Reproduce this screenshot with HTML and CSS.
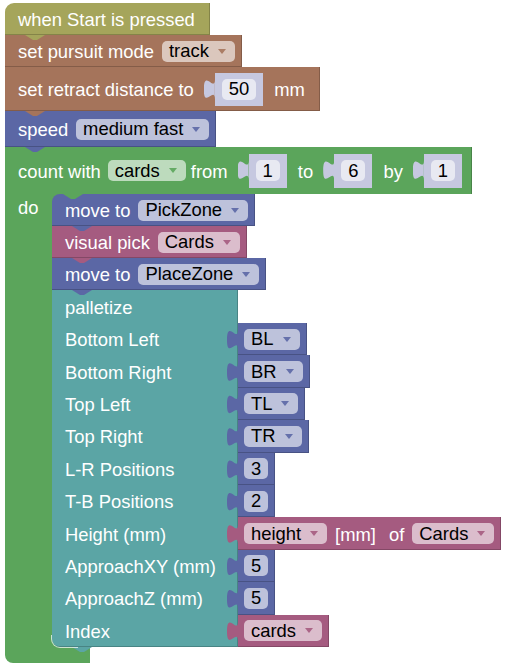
FILE: index.html
```html
<!DOCTYPE html>
<html>
<head>
    <meta charset="UTF-8">
    <link rel="stylesheet" href="styles.css">
</head>
<body>
    <div id="workspace">
        <div class="stack">
            <div class="block event hat next">
                <span class="label last">when Start is pressed</span>
            </div>
            <div class="block pursuit next">
                <span class="label">set pursuit mode</span>
                <span class="dropdown">track<i class="arrow"></i></span>
            </div>
            <div class="block pursuit retract next">
                <span class="label">set retract distance to</span>
                <span class="value shadow"><span class="field">50</span></span>
                <span class="label last">mm</span>
            </div>
            <div class="block motion speed next">
                <span class="label">speed</span>
                <span class="dropdown">medium fast<i class="arrow"></i></span>
            </div>
            <div class="loop loops">
                <div class="block loop-head">
                    <span class="label">count with</span>
                    <span class="dropdown var">cards<i class="arrow"></i></span>
                    <span class="label">from</span>
                    <span class="value shadow"><span class="field">1</span></span>
                    <span class="label">to</span>
                    <span class="value shadow"><span class="field">6</span></span>
                    <span class="label">by</span>
                    <span class="value shadow"><span class="field">1</span></span>
                </div>
                <div class="loop-body">
                    <div class="loop-arm"><span class="label">do</span></div>
                    <div class="inner">
                        <div class="block motion next">
                            <span class="label">move to</span>
                            <span class="dropdown">PickZone<i class="arrow"></i></span>
                        </div>
                        <div class="block vision next">
                            <span class="label">visual pick</span>
                            <span class="dropdown">Cards<i class="arrow"></i></span>
                        </div>
                        <div class="block motion next">
                            <span class="label">move to</span>
                            <span class="dropdown">PlaceZone<i class="arrow"></i></span>
                        </div>
                        <div class="block pallet palletize next">
                            <div class="row"><span class="label">palletize</span></div>
                            <div class="row">
                                <span class="label">Bottom Left</span>
                                <span class="value motion"><span class="dropdown">BL<i class="arrow"></i></span></span>
                            </div>
                            <div class="row">
                                <span class="label">Bottom Right</span>
                                <span class="value motion"><span class="dropdown">BR<i class="arrow"></i></span></span>
                            </div>
                            <div class="row">
                                <span class="label">Top Left</span>
                                <span class="value motion"><span class="dropdown">TL<i class="arrow"></i></span></span>
                            </div>
                            <div class="row">
                                <span class="label">Top Right</span>
                                <span class="value motion"><span class="dropdown">TR<i class="arrow"></i></span></span>
                            </div>
                            <div class="row">
                                <span class="label">L-R Positions</span>
                                <span class="value motion"><span class="field">3</span></span>
                            </div>
                            <div class="row">
                                <span class="label">T-B Positions</span>
                                <span class="value motion"><span class="field">2</span></span>
                            </div>
                            <div class="row">
                                <span class="label">Height (mm)</span>
                                <span class="value vision">
                                    <span class="dropdown">height<i class="arrow"></i></span>
                                    <span class="label">[mm]</span>
                                    <span class="label of">of</span>
                                    <span class="dropdown">Cards<i class="arrow"></i></span>
                                </span>
                            </div>
                            <div class="row">
                                <span class="label">ApproachXY (mm)</span>
                                <span class="value motion"><span class="field">5</span></span>
                            </div>
                            <div class="row">
                                <span class="label">ApproachZ (mm)</span>
                                <span class="value motion"><span class="field">5</span></span>
                            </div>
                            <div class="row">
                                <span class="label">Index</span>
                                <span class="value vision"><span class="dropdown">cards<i class="arrow"></i></span></span>
                            </div>
                        </div>
                    </div>
                </div>
                <div class="loop-foot next"></div>
            </div>
        </div>
    </div>
</body>
</html>
```

FILE: styles.css
```css
body {
    margin: 0;
    background: #fff;
    font-family: "Liberation Sans", Arial, sans-serif;
    font-size: 18.4px;
}
#workspace {
    padding: 3px 0 0 5px;
}
.stack {
    display: flex;
    flex-direction: column;
    align-items: flex-start;
}

/* category colours: block fill and field fill */
.event   { --c: #a5a55b; --f: #dbdbbd; }
.pursuit { --c: #a5745b; --f: #dbc7bd; }
.motion  { --c: #5b67a5; --f: #bdc2db; }
.loops   { --c: #5ba55b; --f: #bddbbd; }
.vision  { --c: #a55b80; --f: #dbbdcc; }
.pallet  { --c: #5ba5a5; --f: #bddbdb; }
.shadow  { --c: #c6c8e0; --f: #e8e9f2; }

.block {
    position: relative;
    display: flex;
    align-items: center;
    gap: 8px;
    height: 32px;
    padding: 0 7px 0 13px;
    box-sizing: border-box;
    background: var(--c);
    box-shadow: inset -1px -1px 0 rgba(0, 0, 0, 0.2);
    color: #fff;
    white-space: nowrap;
}
.label {
    line-height: 21px;
    padding-top: 1px;
}
.label.last {
    margin-right: 8px;
}
.hat {
    border-top-left-radius: 9px;
}
.retract {
    height: 44px;
}
.speed {
    height: 36px;
}

/* tab below a statement that slots into the next one */
.next::after {
    content: "";
    position: absolute;
    z-index: 1;
    left: 20px;
    bottom: -5px;
    width: 20px;
    height: 5px;
    background: var(--c);
    clip-path: polygon(0 0, 100% 0, 60% 100%, 40% 100%);
}

.dropdown {
    display: flex;
    align-items: center;
    height: 21px;
    padding: 0 9px 0 7px;
    border-radius: 5px;
    background: var(--f);
    color: #000;
    line-height: 20px;
}
.dropdown.var {
    margin-left: -1px;
    margin-right: -3px;
}
.arrow {
    width: 0;
    height: 0;
    margin-left: 9px;
    border-left: 4px solid transparent;
    border-right: 4px solid transparent;
    border-top: 5px solid var(--c);
    opacity: 0.9;
}
.field {
    display: flex;
    align-items: center;
    justify-content: center;
    min-width: 23px;
    height: 21px;
    padding: 0 7px;
    box-sizing: border-box;
    border-radius: 5px;
    background: var(--f);
    color: #000;
    line-height: 20px;
}

/* value block with its puzzle tab on the left */
.value {
    position: relative;
    display: flex;
    align-items: center;
    gap: 8px;
    height: 33px;
    margin: 0 3px 0 13px;
    padding: 0 7px;
    box-sizing: border-box;
    background: var(--c);
    box-shadow: inset -1px -1px 0 rgba(0, 0, 0, 0.2);
    color: #fff;
}
.value::before {
    content: "";
    position: absolute;
    z-index: 1;
    left: -11px;
    top: 0;
    width: 11px;
    height: 27px;
    background: var(--c);
    clip-path: path("M11 0 V7 C11 20 0 -4 0 17 C0 37 11 13 11 27 Z");
}
.value.shadow {
    box-shadow: none;
}
.label.of {
    margin-left: 5px;
}

/* count with ... do */
.loop {
    display: flex;
    flex-direction: column;
    align-items: flex-start;
}
.loop-head {
    height: 47px;
    box-shadow: inset -1px 0 0 rgba(0, 0, 0, 0.2);
}
.loop-head .value {
    height: 34px;
}
.loop-body {
    display: flex;
}
.loop-arm {
    width: 47px;
    padding: 3px 0 0 13px;
    box-sizing: border-box;
    background: var(--c);
    color: #fff;
}
.inner {
    position: relative;
    display: flex;
    flex-direction: column;
    align-items: flex-start;
    background:
        linear-gradient(#5ba55b, #5ba55b) left top / 10px 10px no-repeat,
        linear-gradient(#5ba55b, #5ba55b) left bottom / 10px 10px no-repeat;
}
.inner::before {
    content: "";
    position: absolute;
    z-index: 1;
    left: 11px;
    top: 0;
    width: 20px;
    height: 5px;
    background: #5ba55b;
    clip-path: polygon(0 0, 100% 0, 60% 100%, 40% 100%);
}
.inner::after {
    content: "";
    position: absolute;
    z-index: 1;
    left: -1px;
    bottom: -1px;
    width: 26px;
    height: 12px;
    border-left: 1px solid rgba(255, 255, 255, 0.7);
    border-bottom: 1px solid rgba(255, 255, 255, 0.7);
    border-bottom-left-radius: 9px;
}
.inner > .block:first-child {
    border-top-left-radius: 8px;
}
.loop-foot {
    position: relative;
    width: 85px;
    height: 16px;
    background: var(--c);
    border-bottom-left-radius: 8px;
}

/* palletize: labels on the left, inputs hanging off the right edge */
.palletize {
    flex-direction: column;
    align-items: stretch;
    gap: 0;
    width: 186px;
    height: auto;
    padding: 0;
    border-bottom-left-radius: 8px;
}
.row {
    display: flex;
    align-items: center;
    height: 32.4px;
}
.row:first-child {
    height: 33px;
}
.row > .label {
    flex: 0 0 186px;
    padding-left: 13px;
    box-sizing: border-box;
}
.row .value {
    align-self: stretch;
    height: auto;
    margin: 0;
    padding: 0 7px 0 6px;
}
```
